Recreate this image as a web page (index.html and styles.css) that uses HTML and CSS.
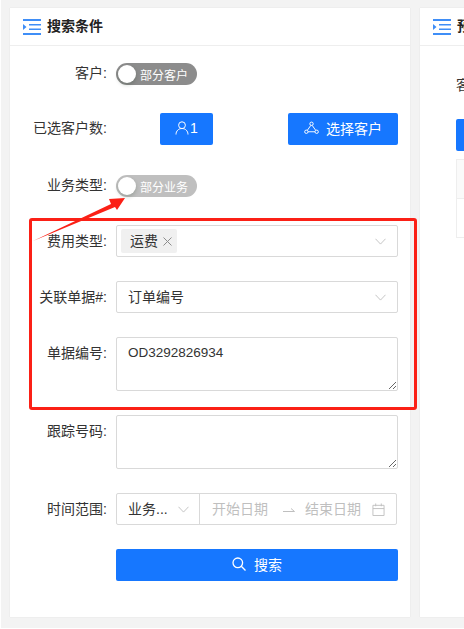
FILE: index.html
```html
<!DOCTYPE html>
<html lang="zh-CN">
<head>
    <meta charset="UTF-8">
    <title>搜索条件</title>
    <link rel="stylesheet" href="styles.css">
</head>
<body>
    <div class="page">
        <div class="card search-card">
            <div class="card-head">
                <svg class="head-icon" viewBox="0 0 18 16"><path d="M0 0h18v2H0zM0 14h18v2H0zM6 5h12v1.600H6zM6 9.400h12V11H6zM0 5l3.500 3L0 11z"/></svg>
                <span>搜索条件</span>
            </div>
            <div class="form">
                <div class="row">
                    <label>客户:</label>
                    <div class="switch"><i></i><span>部分客户</span></div>
                </div>
                <div class="row">
                    <label class="label-high">已选客户数:</label>
                    <div class="btn-row">
                        <button class="btn btn-count">
                            <svg viewBox="0 0 14 14"><circle cx="7" cy="4.200" r="3.400"/><path d="M1 13.500c0-3.500 2.500-6 6-6s6 2.500 6 6"/></svg>1
                        </button>
                        <button class="btn btn-pick">
                            <svg viewBox="0 0 16 14"><circle cx="8" cy="2.500" r="1.800"/><circle cx="2.500" cy="11" r="1.800"/><circle cx="13.500" cy="11" r="1.800"/><path d="M7.300 4.200 3.500 9.500M8.700 4.200l3.800 5.300M4.300 11h7.400"/></svg>
                            选择客户
                        </button>
                    </div>
                </div>
                <div class="row">
                    <label>业务类型:</label>
                    <div class="switch switch-light"><i></i><span>部分业务</span></div>
                </div>
                <div class="row">
                    <label>费用类型:</label>
                    <div class="select select-tags">
                        <span class="tag">运费<svg viewBox="0 0 9 9"><path d="m.5.500 8 8M8.500.500l-8 8"/></svg></span>
                        <svg class="arrow" viewBox="0 0 12 7"><path d="M.5.500 6 6.300 11.500.500"/></svg>
                    </div>
                </div>
                <div class="row">
                    <label>关联单据#:</label>
                    <div class="select">
                        <span class="value">订单编号</span>
                        <svg class="arrow" viewBox="0 0 12 7"><path d="M.5.500 6 6.300 11.500.500"/></svg>
                    </div>
                </div>
                <div class="row">
                    <label>单据编号:</label>
                    <textarea class="textarea">OD3292826934</textarea>
                </div>
                <div class="row">
                    <label>跟踪号码:</label>
                    <textarea class="textarea"></textarea>
                </div>
                <div class="row">
                    <label>时间范围:</label>
                    <div class="range">
                        <div class="range-type">
                            <span class="value">业务...</span>
                            <svg class="arrow" viewBox="0 0 12 7"><path d="M.5.500 6 6.300 11.500.500"/></svg>
                        </div>
                        <div class="range-dates">
                            <span class="value">开始日期</span>
                            <svg class="range-sep" viewBox="0 0 12 6"><path d="M0 4.500h11.500L8 1.500"/></svg>
                            <span class="value">结束日期</span>
                            <svg class="calendar" viewBox="0 0 14 14"><path d="M1 2.500h12v11H1zM1 6h12M4 .5v3M10 .5v3"/></svg>
                        </div>
                    </div>
                </div>
                <div class="row">
                    <label></label>
                    <button class="btn btn-search">
                        <svg viewBox="0 0 14 14"><circle cx="5.800" cy="5.800" r="4.800"/><path d="m9.300 9.300 4.200 4.200"/></svg>
                        搜索
                    </button>
                </div>
            </div>
        </div>
        <div class="card preview-card">
            <div class="card-head">
                <svg class="head-icon" viewBox="0 0 18 16"><path d="M0 0h18v2H0zM0 14h18v2H0zM6 5h12v1.600H6zM6 9.400h12V11H6zM0 5l3.500 3L0 11z"/></svg>
                <span>预览结果</span>
            </div>
            <div class="preview-body">
                <div class="preview-label">客户</div>
                <div class="preview-btn"></div>
                <div class="preview-table"><div></div></div>
            </div>
        </div>
    </div>

    <!-- annotation drawn over the form -->
    <div class="mark-box"></div>
    <svg class="mark-arrow" viewBox="0 0 464 629"><path d="M33 241 111 204 109 199 125 198 117 210 115 207z"/></svg>
</body>
</html>
```

FILE: styles.css
```css
* {
    margin: 0;
    padding: 0;
    box-sizing: border-box;
}

html, body {
    width: 464px;
    height: 629px;
    overflow: hidden;
}

body {
    position: relative;
    background-color: #fff;
    font-family: "Liberation Sans", "Noto Sans CJK SC", sans-serif;
    font-size: 14px;
    color: #333;
}

.page {
    display: flex;
    gap: 10px;
    height: 628px;
    margin-left: 1px;
    padding: 8px 0 0 9px;
    background-color: #f3f3f3;
}

.card {
    background-color: #fff;
    flex: none;
    height: 609px;
    box-shadow: 0 0 1px rgba(0, 0, 0, 0.12);
}

.search-card {
    width: 400px;
}

.preview-card {
    width: 400px;
}

.card-head {
    display: flex;
    align-items: center;
    gap: 6px;
    height: 38px;
    padding-left: 13px;
    border-bottom: 1px solid #eee;
    font-weight: bold;
    color: #222;
}

.card-head span {
    padding-bottom: 3px;
}

.head-icon {
    width: 18px;
    height: 16px;
    fill: #3f8ef7;
}

.form {
    display: flex;
    flex-direction: column;
    gap: 24px;
    padding: 11px 12px 0 0;
}

.row {
    display: flex;
    min-height: 32px;
}

.row label {
    width: 97px;
    margin-right: 9px;
    flex: none;
    line-height: 32px;
    text-align: right;
    color: #333;
}

.row .label-high {
    line-height: 30px;
}

.switch {
    display: flex;
    align-items: center;
    width: 81px;
    height: 22px;
    margin-top: 6px;
    padding: 2px;
    border-radius: 11px;
    background-color: #8c8c8c;
    color: #fff;
    font-size: 12px;
}

.switch-light {
    background-color: #bfbfbf;
}

.switch i {
    width: 18px;
    height: 18px;
    border-radius: 50%;
    background-color: #fff;
    box-shadow: 0 2px 4px rgba(0, 35, 11, 0.2);
}

.switch span {
    margin-left: 4px;
}

.btn-row {
    display: flex;
    justify-content: space-between;
    width: 282px;
    padding-left: 44px;
}

.btn {
    display: flex;
    align-items: center;
    justify-content: center;
    height: 32px;
    padding-bottom: 2px;
    border: none;
    border-radius: 2px;
    background-color: #1677ff;
    color: #fff;
    font-family: inherit;
    font-size: 14px;
}

.btn svg {
    fill: none;
    stroke: #fff;
}

.btn-count {
    width: 53px;
    gap: 1px;
}

.btn-count svg {
    width: 14px;
    height: 14px;
}

.btn-pick {
    width: 110px;
    gap: 7px;
}

.btn-pick svg {
    width: 15px;
    height: 14px;
}

.btn-search {
    width: 282px;
    gap: 8px;
}

.btn-search svg {
    width: 14px;
    height: 14px;
    stroke-width: 1.3;
}

.select {
    display: flex;
    align-items: center;
    justify-content: space-between;
    width: 282px;
    height: 32px;
    padding: 0 11px 0 11px;
    border: 1px solid #d9d9d9;
    border-radius: 2px;
}

.select-tags {
    padding-left: 4px;
}

.value {
    padding-bottom: 2px;
    white-space: nowrap;
}

.tag {
    display: flex;
    align-items: center;
    gap: 5px;
    height: 24px;
    padding: 0 5px 2px 9px;
    border-radius: 2px;
    background-color: #f0f0f0;
}

.tag svg {
    width: 9px;
    height: 9px;
    margin-top: 2px;
    fill: none;
    stroke: #8c8c8c;
}

.arrow {
    width: 11px;
    height: 7px;
    fill: none;
    stroke: #bfbfbf;
}

.textarea {
    display: block;
    width: 282px;
    height: 54px;
    padding: 4px 11px;
    border: 1px solid #d9d9d9;
    border-radius: 2px;
    font-family: inherit;
    font-size: 13.5px;
    line-height: 22px;
    color: #333;
    outline: none;
}

.range {
    display: flex;
    width: 281px;
    height: 32px;
    border: 1px solid #d9d9d9;
    border-radius: 2px;
}

.range-type {
    display: flex;
    align-items: center;
    justify-content: space-between;
    width: 83px;
    padding: 0 10px 0 11px;
    border-right: 1px solid #d9d9d9;
}

.range-dates {
    display: flex;
    align-items: center;
    flex: 1;
    padding-left: 12px;
    color: #bfbfbf;
}

.range-sep {
    width: 12px;
    height: 6px;
    margin: 2px 10px 0 15px;
    fill: none;
    stroke: #bfbfbf;
}

.calendar {
    width: 13px;
    height: 13px;
    margin-left: 11px;
    flex: none;
    fill: none;
    stroke: #bfbfbf;
}

.preview-body {
    padding: 28px 0 0 36px;
}

.preview-label {
    line-height: 22px;
    color: #333;
}

.preview-btn {
    width: 100px;
    height: 32px;
    margin-top: 23px;
    border-radius: 2px;
    background-color: #1677ff;
}

.preview-table {
    width: 300px;
    height: 79px;
    margin-top: 8px;
    border: 1px solid #eee;
    background-color: #fff;
}

.preview-table div {
    height: 39px;
    background-color: #fafafa;
    border-bottom: 1px solid #eee;
}

.mark-box {
    position: absolute;
    left: 29px;
    top: 218px;
    width: 388px;
    height: 192px;
    border: 3px solid #fb2016;
    border-radius: 3px;
}

.mark-arrow {
    position: absolute;
    left: 0;
    top: 0;
    width: 464px;
    height: 629px;
    fill: #fb2016;
}
```
